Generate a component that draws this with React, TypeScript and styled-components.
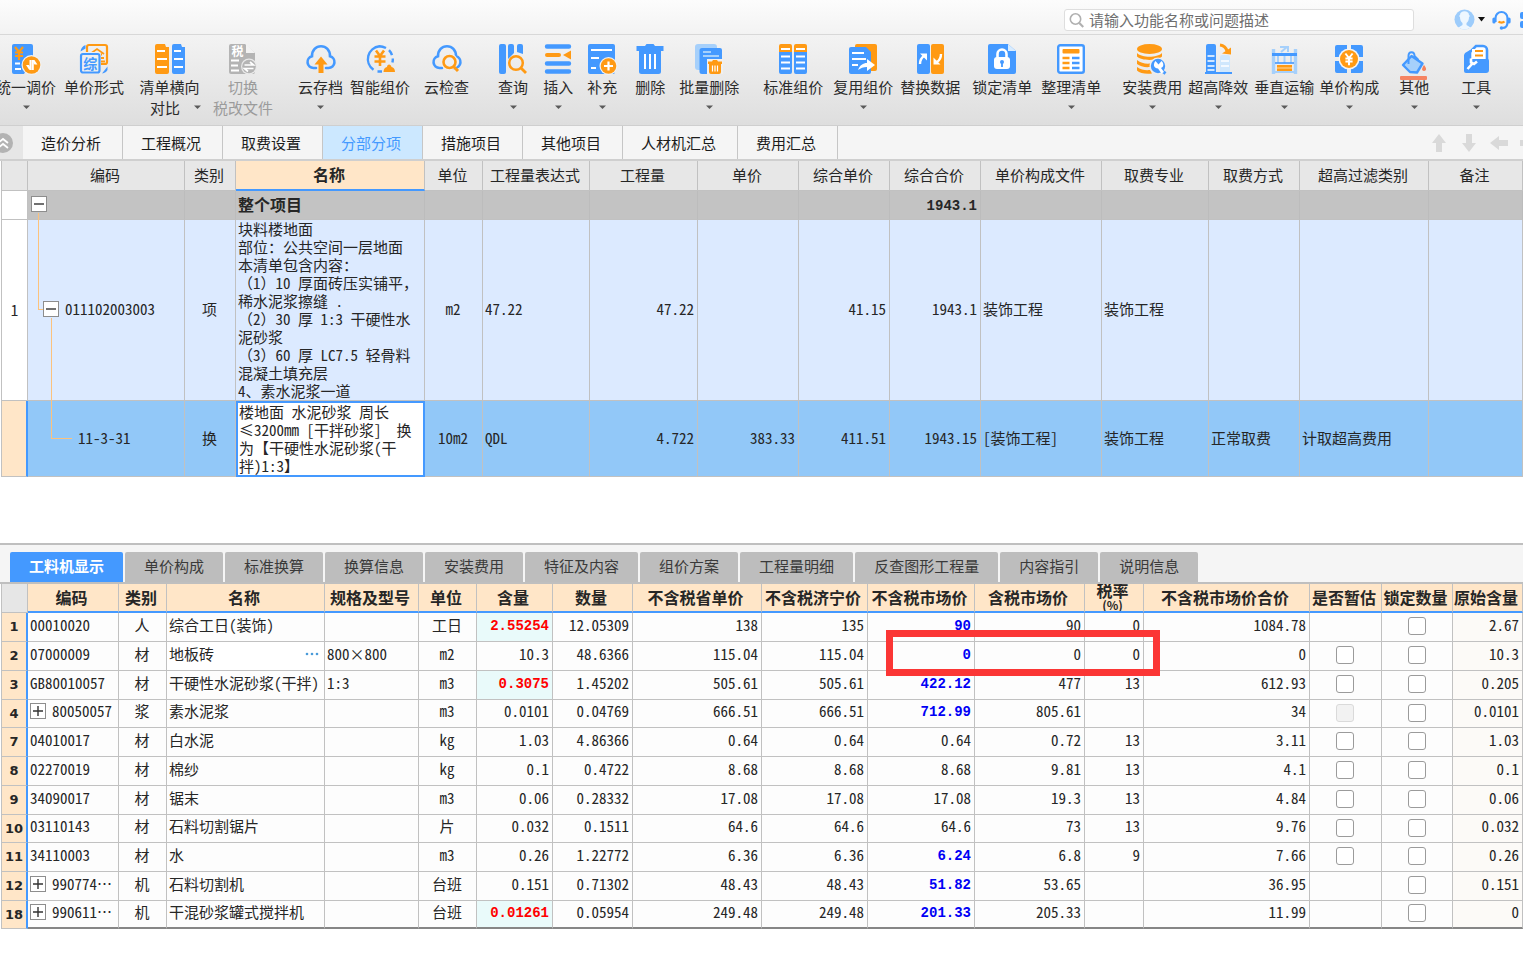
import React from "react";
import styled, { createGlobalStyle, css } from "styled-components";

const BLUE = "#4499ff";
const ORANGE = "#ff9a14";
const PALE = "#a6d0fb";
const GRAY = "#b4b4b4";
const LINE = "#c1c1c1";
const UI_FONT = '"Noto Sans CJK SC", "Liberation Sans", sans-serif';
const GRID_FONT = '"Noto Sans Mono CJK SC", "Liberation Mono", "Noto Sans CJK SC", monospace';
const NUM_FONT = '"Liberation Mono", monospace';

const GlobalStyle = createGlobalStyle`
  *, *::before, *::after { box-sizing: border-box; }
  body { margin: 0; background: #fff; color: #222; font-family: ${UI_FONT}; font-size: 15px; overflow: hidden; }
  button, input { font: inherit; color: inherit; }
  button { border: 0; background: none; padding: 0; margin: 0; }
`;

const Page = styled.div`
  display: flex;
  flex-direction: column;
  min-height: 100vh;
  overflow: hidden;
`;

/* ---------- title bar ---------- */

const TitleBar = styled.header`
  display: flex;
  align-items: center;
  justify-content: flex-end;
  height: 35px;
  padding-top: 5px;
  background: linear-gradient(#fcfcfc, #f3f3f3);
  border-bottom: 1px solid #d8d8d8;
`;

const SearchBox = styled.label`
  display: flex;
  align-items: center;
  gap: 5px;
  width: 350px;
  height: 22px;
  margin-right: 40px;
  padding: 0 4px;
  background: #fff;
  border: 1px solid #dedede;
  border-radius: 3px;
`;

const SearchInput = styled.input`
  flex: 1;
  min-width: 0;
  height: 20px;
  padding: 0;
  border: 0;
  outline: 0;
  background: none;
  line-height: 20px;
  &::placeholder { color: #6f6f6f; opacity: 1; }
`;

const UserButton = styled.button`
  display: flex;
  align-items: center;
  gap: 3px;
  margin-right: 7px;
`;

const TitleIcon = styled.button`
  display: flex;
  margin-right: 9px;
`;

const ClippedIcon = styled.button`
  display: flex;
  margin-right: -14px;
`;

/* ---------- ribbon ---------- */

const Ribbon = styled.div`
  display: flex;
  height: 91px;
  padding-top: 9px;
  background: linear-gradient(#f3f3f3, #dedede);
  border-bottom: 1px solid #cfcfcf;
`;

const ToolButton = styled.button<{ $before: number; $disabled?: boolean }>`
  display: flex;
  flex: none;
  flex-direction: column;
  align-items: center;
  margin-left: ${(p) => p.$before}px;
  line-height: 21px;
  color: ${(p) => (p.$disabled ? "#9b9b9b" : "#2b2b2b")};
  white-space: nowrap;
`;

const ToolLabel = styled.span`
  margin-top: 2px;
`;

const SecondLine = styled.span<{ $split?: boolean }>`
  display: flex;
  align-items: center;
  justify-content: center;
  gap: 14px;
  min-height: 21px;
  padding-left: ${(p) => (p.$split ? 12 : 0)}px;
`;

/* ---------- page tabs ---------- */

const TabStrip = styled.nav`
  display: flex;
  height: 35px;
  background: #f5f5f5;
  border-bottom: 2px solid #cfcfcf;
`;

const Collapse = styled.button`
  display: flex;
  align-items: center;
  width: 23px;
  background: #e6e6e6;
`;

const PageTab = styled.button<{ $active?: boolean }>`
  padding: 1px 21px 0 18px;
  border-right: 1px solid #c6c6c6;
  color: ${(p) => (p.$active ? BLUE : "#1c1c1c")};
  background: ${(p) => (p.$active ? "#cce8ff" : "transparent")};
  line-height: 20px;
  white-space: nowrap;
`;

const Arrows = styled.div`
  display: flex;
  align-items: center;
  gap: 12px;
  margin-left: auto;
  margin-right: -15px;
`;

const ArrowButton = styled.button`
  display: flex;
`;

/* ---------- grids ---------- */

const UpperPane = styled.section`
  height: 382px;
  padding-left: 1px;
  overflow: hidden;
`;

const Grid = styled.table`
  width: 100%;
  table-layout: fixed;
  border-collapse: separate;
  border-spacing: 0;
  font-family: ${GRID_FONT};
  font-size: 15px;
  line-height: 18px;
  color: #262626;
`;

const cellBorder = css`
  border-right: 1px solid ${LINE};
  border-bottom: 1px solid ${LINE};
`;

const UpperHead = styled.th<{ $current?: boolean }>`
  ${cellBorder}
  height: 30px;
  padding: 0 2px 2px 0;
  background: #e7e7e7;
  font-family: ${UI_FONT};
  font-weight: 400;
  white-space: nowrap;
  &:first-child { border-left: 1px solid ${LINE}; }
  ${(p) =>
    p.$current &&
    css`
      background: #ffe6c8;
      font-size: 16px;
      font-weight: 700;
      border-bottom: 2px solid ${BLUE};
    `}
`;

type Align = "left" | "center" | "right";

const Cell = styled.td<{ $align?: Align }>`
  ${cellBorder}
  padding: 0 3px 2px 2px;
  text-align: ${(p) => p.$align ?? "left"};
  white-space: nowrap;
`;

const ParagraphCell = styled(Cell)`
  padding-bottom: 0;
`;

const RowNumber = styled.th`
  ${cellBorder}
  border-left: 1px solid ${LINE};
  padding: 0;
  font-weight: 400;
  background: #fff;
`;

const TotalRow = styled.tr`
  height: 29px;
  font-size: 16px;
  font-weight: 700;
  background: #c3c3c3;
  ${Cell} { border-right-color: #bcbcbc; }
`;

const ItemRow = styled.tr`
  height: 181px;
  background: #dceaff;
`;

const CurrentRow = styled.tr`
  height: 76px;
  background: #92c8f8;
  ${RowNumber} {
    background: #ffe6c8;
    border-right: 2px solid ${BLUE};
  }
`;

const EditedCell = styled(ParagraphCell)`
  background: #fff;
  border: 2px solid ${BLUE};
  padding: 0 0 0 1px;
`;

const TreeCell = styled(Cell)<{ $indent: number }>`
  position: relative;
  padding-left: ${(p) => p.$indent}px;
`;

const TreeLine = styled.div`
  display: flex;
  align-items: center;
  gap: 6px;
`;

const TreeToggle = styled.button`
  display: flex;
  flex: none;
  align-items: center;
  justify-content: center;
  width: 16px;
  height: 16px;
  background: #fff;
  border: 1px solid #8d8d8d;
`;

const branch = css`
  content: "";
  position: absolute;
  border: 0 solid #fcc27c;
`;

const RootCell = styled(TreeCell)`
  &::after { ${branch} left: 10px; top: 22px; bottom: -1px; border-left-width: 1px; }
`;

const ParentCell = styled(TreeCell)`
  &::before { ${branch} left: 10px; top: 0; bottom: 50%; width: 5px; border-left-width: 1px; border-bottom-width: 1px; }
  &::after { ${branch} left: 23px; top: 98px; bottom: -1px; border-left-width: 1px; }
`;

const LeafCell = styled(TreeCell)`
  &::before { ${branch} left: 23px; top: 0; bottom: 50%; width: 21px; border-left-width: 1px; border-bottom-width: 1px; }
`;

/* ---------- lower pane ---------- */

const LowerPane = styled.section`
  border-top: 2px solid #bfbfbf;
`;

const DetailTabs = styled.nav`
  display: flex;
  align-items: flex-end;
  gap: 2px;
  height: 39px;
  padding-left: 10px;
  background: #f5f5f5;
  border-bottom: 2px solid #bfbfbf;
`;

const DetailTab = styled.button<{ $active?: boolean }>`
  height: 30px;
  padding: 0 19px 2px;
  border-radius: 2px 2px 0 0;
  line-height: 28px;
  white-space: nowrap;
  color: ${(p) => (p.$active ? "#fff" : "#3a3a3a")};
  font-weight: ${(p) => (p.$active ? 700 : 400)};
  background: ${(p) => (p.$active ? BLUE : "#bdbdbd")};
`;

const LowerWrap = styled.div`
  padding-left: 1px;
`;

const ResourceGrid = styled(Grid)`
  background: #fdfdfd;
  ${RowNumber} {
    font-family: "DejaVu Sans", sans-serif;
    font-size: 13px;
    font-weight: 700;
    background: #ffe6c8;
    border-right: 2px solid ${BLUE};
  }
  ${Cell} { padding-bottom: 5px; }
  ${Cell}:last-child { background: #fcfaf7; }
  tbody tr { height: 29px; }
  tbody tr:nth-child(4n), tbody tr:last-child { height: 28px; }
  tbody tr:last-child ${Cell} { border-bottom: 2px solid #868686; }
`;

const LowerHead = styled.th`
  height: 29px;
  padding: 0;
  border-right: 1px solid ${LINE};
  border-bottom: 2px solid ${BLUE};
  background: #ffe6c8;
  font-family: ${UI_FONT};
  font-size: 16px;
  font-weight: 700;
  line-height: 16px;
  white-space: nowrap;
  &:first-child { background: #e6e6e6; border-left: 1px solid ${LINE}; border-bottom: 1px solid ${LINE}; }
`;

const HeadText = styled.div`
  display: flex;
  flex-direction: column;
  align-items: center;
  justify-content: center;
  height: 27px;
  padding: 0 3px 2px 0;
  overflow: hidden;
`;

const HeadUnit = styled.span`
  font-size: 12px;
  line-height: 13px;
`;

const Emphasis = styled.span<{ $tone: string }>`
  font-family: ${NUM_FONT};
  font-size: 14px;
  font-weight: 700;
  color: ${(p) => p.$tone};
`;

const ChangedCell = styled(Cell)`
  background: #e9fafa;
`;

const PickerCell = styled(Cell)`
  background: #fff;
`;

const PickerLine = styled.div`
  display: flex;
  align-items: center;
  justify-content: space-between;
`;

const PickerButton = styled.button`
  display: flex;
`;

const MarkedCell = styled(Cell)`
  position: relative;
`;

const RedFrame = styled.span`
  position: absolute;
  z-index: 2;
  left: 18px;
  top: -12px;
  width: 274px;
  height: 46px;
  border: 7px solid #fb3635;
  pointer-events: none;
`;

const Tick = styled.input`
  appearance: none;
  display: block;
  width: 18px;
  height: 18px;
  margin: 3px auto 0;
  background: #fff;
  border: 1px solid #9b9b9b;
  border-radius: 3px;
  &:disabled { background: #f2f2f2; border-color: #dadada; }
`;

/* ---------- icons ---------- */

const IconSvg = styled.svg`
  overflow: visible;
`;

const Svg = ({ children }: { children: React.ReactNode }) => (
  <IconSvg width="30" height="30" viewBox="0 0 30 30" fill="none" aria-hidden="true">
    {children}
  </IconSvg>
);

const Caret = ({ color = "#5a5a5a" }: { color?: string }) => (
  <svg width="7" height="21" viewBox="0 0 7 21" aria-hidden="true">
    <path d="M0 8.500h7L3.500 12z" fill={color} />
  </svg>
);

const Yen = ({ x, y, s, color }: { x: number; y: number; s: number; color: string }) => (
  <g transform={`translate(${x} ${y}) scale(${s})`} stroke={color} strokeWidth="2.200">
    <path d="M1 0l4 5 4-5M5 5v8M1 5.500h8M1 9h8" />
  </g>
);

const Cloud = () => (
  <path
    d="M10 24H7.500A6 6 0 0 1 6 12.200C6 6 10 2.300 15 2.300s9 3.700 9 9.900A6 6 0 0 1 22.500 24H20"
    stroke={BLUE}
    strokeWidth="2.600"
    strokeLinecap="round"
  />
);

const icons: Record<string, React.ReactNode> = {
  adjust: (
    <Svg>
      <path d="M3 0h17a2 2 0 0 1 2 2v12l-9 16H3a2 2 0 0 1-2-2V2a2 2 0 0 1 2-2z" fill={BLUE} />
      <Yen x={3} y={3} s={1} color={ORANGE} />
      <path d="M4 19.500h5M4 25h6" stroke="#fff" strokeWidth="1.800" />
      <circle cx="20.500" cy="21" r="10" fill="#f2f2f2" />
      <circle cx="20.500" cy="21" r="8.800" fill={ORANGE} />
      <path d="M19.500 16v10M21.800 26V16" stroke="#fff" strokeWidth="2" />
      <path d="M20.400 25.500h-2.400l-3-4.500h3zM21 16h2.400l3 4.500h-3z" fill="#fff" />
    </Svg>
  ),
  priceForm: (
    <Svg>
      <rect x="8" y="1" width="20" height="19" rx="2" stroke={ORANGE} strokeWidth="2.200" />
      <path d="M11 10l7-5 7 5M14 10.500h9M21 14h4M21 17.500h5" stroke={ORANGE} strokeWidth="1.800" />
      <rect x="0" y="8" width="22" height="22" rx="3" fill="#efefef" />
      <rect x="2" y="10" width="18.500" height="18.500" rx="2" stroke={BLUE} strokeWidth="2.200" />
      <text x="11.200" y="24.500" textAnchor="middle" fontSize="14" fontWeight="700" fill={BLUE}>综</text>
      <path d="M1.500 7.500c.5-3 2-5.500 5-6.500v3.500zM23 29.500l5.500-7v3.500c-1 2-2.500 3-5.500 3.500z" fill={BLUE} />
    </Svg>
  ),
  compare: (
    <Svg>
      <path d="M2 0h8l1 3h3v25a2 2 0 0 1-2 2H2a2 2 0 0 1-2-2V2a2 2 0 0 1 2-2z" fill={ORANGE} />
      <path d="M19 0h7l1 3h3v25a2 2 0 0 1-2 2h-9a2 2 0 0 1-2-2V2a2 2 0 0 1 2-2z" fill={BLUE} />
      <path d="M2 7h8M2 15h10M2 23h10M19 7h7M19 15h9M19 23h9" stroke="#fff" strokeWidth="2" />
    </Svg>
  ),
  switchTax: (
    <Svg>
      <path d="M3 0h14l10 9v19a2 2 0 0 1-2 2H3a2 2 0 0 1-2-2V2a2 2 0 0 1 2-2z" fill={GRAY} />
      <path d="M18 0v9h9z" fill="#f2f2f2" />
      <text x="9.500" y="12" textAnchor="middle" fontSize="12" fontWeight="700" fill="#fff">税</text>
      <path d="M3 16.500h8M3 21.500h7M3 26.500h8" stroke="#fff" strokeWidth="1.800" />
      <circle cx="21" cy="22.500" r="8" fill="#e9e9e9" />
      <circle cx="21" cy="22.500" r="6.800" fill={GRAY} />
      <path d="M16.500 21h9l-3.500-3M25.500 24.500h-9l3.500 3" stroke="#fff" strokeWidth="1.700" />
    </Svg>
  ),
  cloudSave: (
    <Svg>
      <Cloud />
      <path d="M15 12.500l6.500 8h-4V29h-5v-8.500h-4z" fill={ORANGE} />
    </Svg>
  ),
  smart: (
    <Svg>
      <path d="M8.500 25.800A13 13 0 0 1 14.500 2.200q3 0 6.500 1.800M24 6.200a13 13 0 0 1 3 5M27.800 14.500a13 13 0 0 1-.4 4M12.500 27.500h4.500" stroke={BLUE} strokeWidth="2.400" />
      <path d="M11 6.500l4 5.500 4-5.500M15 11v11M9.500 12.500h11M9.500 17.500h11" stroke={ORANGE} strokeWidth="2.600" />
      <path d="M18.500 28c0-3 1.500-4.500 3.500-5 0-3.500 4-3.500 4.500 0 2 .5 3.500 2 3.500 5z" fill={ORANGE} />
    </Svg>
  ),
  cloudCheck: (
    <Svg>
      <Cloud />
      <circle cx="17.500" cy="18" r="8.500" fill="#efefef" />
      <circle cx="17.500" cy="18" r="6" stroke={ORANGE} strokeWidth="2.600" />
      <path d="M21.500 22.500l4.500 4.500" stroke={ORANGE} strokeWidth="3" />
    </Svg>
  ),
  query: (
    <Svg>
      <rect x="1" width="7" height="30" rx="2" fill={BLUE} />
      <path d="M10 2a2 2 0 0 1 2-2h2a2 2 0 0 1 2 2v7l-6 6zM19 2a2 2 0 0 1 2-2h2a2 2 0 0 1 2 2v8l-6-2z" fill={BLUE} />
      <circle cx="18" cy="19" r="6.800" stroke={ORANGE} strokeWidth="2.500" />
      <path d="M23 24l5 5" stroke={ORANGE} strokeWidth="2.800" />
    </Svg>
  ),
  insert: (
    <Svg>
      <path d="M4 2.500h22M4 19.500h22M4 27.500h22" stroke={BLUE} strokeWidth="4.400" strokeLinecap="round" />
      <path d="M4 11h12" stroke={ORANGE} strokeWidth="4" strokeLinecap="round" />
      <path d="M20 11l8-4.500v9z" fill={ORANGE} />
    </Svg>
  ),
  supplement: (
    <Svg>
      <rect x="1" width="27" height="30" rx="2" fill={BLUE} />
      <path d="M4 6h21M4 14h8M4 24h5" stroke="#fff" strokeWidth="2" />
      <circle cx="21.500" cy="22" r="9" fill="#f2f2f2" />
      <circle cx="21.500" cy="22" r="7.800" fill={ORANGE} />
      <path d="M21.500 17.500v9M17 22h9" stroke="#fff" strokeWidth="2.200" />
    </Svg>
  ),
  trash: (
    <Svg>
      <path d="M10 2l1.500-2h7L20 2h8.500v5H26v20.500a2.500 2.500 0 0 1-2.500 2.500h-17A2.500 2.500 0 0 1 4 27.500V7H1.500V2z" fill={BLUE} />
      <path d="M10 10v15M15 10v15M20 10v15" stroke="#fff" strokeWidth="2" />
    </Svg>
  ),
  batchTrash: (
    <Svg>
      <rect x="1" width="22" height="26" rx="3" fill={PALE} />
      <path d="M8 4h18a2 2 0 0 1 2 2v10l-10 14H8a2.500 2.500 0 0 1-2.500-2.500v-21A2.500 2.500 0 0 1 8 4z" fill={BLUE} />
      <path d="M9 8h8M9 12h16" stroke={PALE} strokeWidth="2" />
      <path d="M13 15h16v15H13z" fill="#f0f0f0" />
      <path d="M14 17.500h4l1-1.500h4l1 1.500h4V20h-1v8a2 2 0 0 1-2 2h-8a2 2 0 0 1-2-2v-8h-1z" fill={ORANGE} />
      <path d="M18.500 21.500v6M21 21.500v6M23.500 21.500v6" stroke="#fff" strokeWidth="1.200" />
    </Svg>
  ),
  standard: (
    <Svg>
      <path d="M1 8V2a2 2 0 0 1 2-2h9a2 2 0 0 1 2 2v6zM16 8V2a2 2 0 0 1 2-2h9a2 2 0 0 1 2 2v6z" fill={ORANGE} />
      <path d="M1 8h13v20a2 2 0 0 1-2 2H3a2 2 0 0 1-2-2zM16 8h13v20a2 2 0 0 1-2 2h-9a2 2 0 0 1-2-2z" fill={BLUE} />
      <path d="M3 5h9M18 5h9M3 12.500h9M18 12.500h9M3 18.500h9M18 18.500h9M3 24.500h9M18 24.500h9" stroke="#fff" strokeWidth="1.800" />
    </Svg>
  ),
  reuse: (
    <Svg>
      <rect x="7" width="22" height="27" rx="2" fill={ORANGE} />
      <path d="M3 3h15l5 5v20a2 2 0 0 1-2 2H3a2 2 0 0 1-2-2V5a2 2 0 0 1 2-2z" fill={BLUE} />
      <path d="M4 9h12M4 15h14M4 21h6" stroke="#fff" strokeWidth="1.800" />
      <path d="M10 26c2-5 5-7 9-7v-4l8 6-8 6v-4c-4 0-6 1-9 3z" fill="#fff" />
    </Svg>
  ),
  replace: (
    <Svg>
      <rect x="2" width="13" height="30" rx="2" fill={BLUE} />
      <rect x="16" width="13" height="30" rx="2" fill={ORANGE} />
      <path d="M5 20c0-4 1-6 4-8M26 10c0 4-1 6-4 8" stroke="#fff" strokeWidth="2.400" />
      <path d="M5 9.500h7v7zM25.500 20.500h-7v-7z" fill="#fff" />
    </Svg>
  ),
  lock: (
    <Svg>
      <path d="M3 0h18l8 7v21a2 2 0 0 1-2 2H3a2 2 0 0 1-2-2V2a2 2 0 0 1 2-2z" fill={BLUE} />
      <path d="M21 0v7h8z" fill="#d8ecff" />
      <path d="M10.500 14v-4a4.500 4.500 0 0 1 9 0v4" stroke="#fff" strokeWidth="2.600" />
      <rect x="7" y="13" width="16" height="12" rx="3" fill="#fff" />
      <circle cx="15" cy="18" r="2" fill={BLUE} />
      <path d="M15 18v5" stroke={BLUE} strokeWidth="1.800" />
    </Svg>
  ),
  arrange: (
    <Svg>
      <rect x="2.200" y="1.200" width="25.600" height="27.600" rx="2" fill="#fff" stroke={BLUE} strokeWidth="2.400" />
      <rect x="6.500" y="5" width="17" height="4.500" rx="1" fill={ORANGE} />
      <path d="M6.500 14h7M6.500 19h7M6.500 24h7" stroke={ORANGE} strokeWidth="2.400" />
      <path d="M16 14h7.500M16 19h7.500M16 24h7.500" stroke={BLUE} strokeWidth="2.400" />
    </Svg>
  ),
  install: (
    <Svg>
      <ellipse cx="12.500" cy="5" rx="12.500" ry="5" fill={ORANGE} />
      <path d="M0 9c5 5 20 5 25 0v3.500c-4 4.500-21 4.500-25 0zM0 16c4 3.500 9 4 14 3.500l-1 3.500c-5 .5-10-.5-13-3zM0 23c4 3 9 3.500 13 3l2 3.500c-6 .8-12 0-15-3z" fill={ORANGE} />
      <circle cx="21" cy="22" r="8.500" fill="#efefef" />
      <circle cx="21" cy="22" r="7.200" fill={BLUE} />
      <path d="M24 26l4.500 3.500" stroke={BLUE} strokeWidth="3" />
      <path d="M18.500 17l3 3.500 3-3.500c3 3 2 6-.5 7l3 4-2.500 1.500-3.500-5c-4 0-5.500-4-2.500-7.500z" fill="#fff" />
    </Svg>
  ),
  highRise: (
    <Svg>
      <path d="M3 2a2 2 0 0 1 2-2h6a2 2 0 0 1 2 2v27H3z" fill={BLUE} />
      <path d="M4.500 12h7M4.500 17h7M4.500 22h7M4.500 26h7" stroke="#fff" strokeWidth="1.600" />
      <path d="M17 13a2 2 0 0 1 2-2h6a2 2 0 0 1 2 2v16H17z" fill="#cfe7fd" />
      <path d="M18 17h8M18 22h8" stroke="#fff" strokeWidth="1.600" />
      <path d="M2 29h27" stroke={BLUE} strokeWidth="2" />
      <path d="M17 1c4 .5 6 2.500 7 6" stroke={ORANGE} strokeWidth="3" />
      <path d="M19 9.500l9-6v7z" fill={ORANGE} />
    </Svg>
  ),
  vertical: (
    <Svg>
      <path d="M4.500 5v25M26.500 5v25" stroke={PALE} strokeWidth="3.400" />
      <path d="M3 10.500h25" stroke={BLUE} strokeWidth="3" />
      <path d="M11 3h8v5M12 8l6-5M9 12v7M15.500 12v7M22 12v7M5 28h21" stroke={PALE} strokeWidth="2" />
      <path d="M6 19h19" stroke={BLUE} strokeWidth="1.600" />
      <rect x="8" y="21" width="15" height="6" fill={ORANGE} />
      <path d="M8 24h15" stroke="#ffd9a0" strokeWidth="1" />
    </Svg>
  ),
  compose: (
    <Svg>
      <path d="M3 1h10v6L7 13H1V3a2 2 0 0 1 2-2zM17 1h10a2 2 0 0 1 2 2v10h-6l-6-6zM1 17h6l6 6v6H3a2 2 0 0 1-2-2zM23 17h6v10a2 2 0 0 1-2 2H17v-6z" fill={BLUE} />
      <circle cx="15" cy="15" r="10.500" fill="#f4f4f4" />
      <circle cx="15" cy="15" r="9" fill={ORANGE} />
      <Yen x={10.5} y={9.5} s={0.9} color="#fff" />
    </Svg>
  ),
  other: (
    <Svg>
      <path d="M12.500 12L4 21l7 7 7 .5 5.500-9z" fill={PALE} stroke={BLUE} strokeWidth="2.400" strokeLinejoin="round" />
      <path d="M9.500 20v-8c0-5 6-5 6 0l4 4" stroke={BLUE} strokeWidth="2" />
      <path d="M25 21c2.500 3 3 5.500 0 6-3-.5-2-3 0-6z" fill="#f5835d" />
      <rect x="1" y="32" width="27" height="4" rx="1" fill="#f58462" />
    </Svg>
  ),
  tools: (
    <Svg>
      <path d="M9 14V8l6-6h7a4 4 0 0 1 4 4v10" fill="#fff" stroke={BLUE} strokeWidth="2.600" />
      <path d="M4 9l5-3 1 9h17a2 2 0 0 1 1 2v9a3 3 0 0 1-3 3H5a2 2 0 0 1-2-2V11z" fill={BLUE} />
      <rect x="11" y="5" width="12" height="10" fill="#fff" />
      <path d="M14 7h8M14 11.500h8" stroke={ORANGE} strokeWidth="2.200" />
      <path d="M6.500 25l5-5.500M10 14.500v4l3 1.500 3-2.500" stroke="#fff" strokeWidth="2.600" />
    </Svg>
  ),
};

/* ---------- data ---------- */

type Tool = { icon: string; label: string; before: number; second?: string; caret?: boolean; disabled?: boolean };

const tools: Tool[] = [
  { icon: "adjust", label: "统一调价", before: -4, caret: true },
  { icon: "priceForm", label: "单价形式", before: 8 },
  { icon: "compare", label: "清单横向", before: 14, second: "对比", caret: true },
  { icon: "switchTax", label: "切换", before: 12, second: "税改文件", disabled: true },
  { icon: "cloudSave", label: "云存档", before: 25, caret: true },
  { icon: "smart", label: "智能组价", before: 7 },
  { icon: "cloudCheck", label: "云检查", before: 14 },
  { icon: "query", label: "查询", before: 29, caret: true },
  { icon: "insert", label: "插入", before: 15, caret: true },
  { icon: "supplement", label: "补充", before: 14, caret: true },
  { icon: "trash", label: "删除", before: 18 },
  { icon: "batchTrash", label: "批量删除", before: 14, caret: true },
  { icon: "standard", label: "标准组价", before: 24 },
  { icon: "reuse", label: "复用组价", before: 10, caret: true },
  { icon: "replace", label: "替换数据", before: 7 },
  { icon: "lock", label: "锁定清单", before: 12 },
  { icon: "arrange", label: "整理清单", before: 9, caret: true },
  { icon: "install", label: "安装费用", before: 21, caret: true },
  { icon: "highRise", label: "超高降效", before: 6, caret: true },
  { icon: "vertical", label: "垂直运输", before: 6, caret: true },
  { icon: "compose", label: "单价构成", before: 5, caret: true },
  { icon: "other", label: "其他", before: 20, caret: true },
  { icon: "tools", label: "工具", before: 32, caret: true },
];

const pageTabs = ["造价分析", "工程概况", "取费设置", "分部分项", "措施项目", "其他项目", "人材机汇总", "费用汇总"];

const upperWidths = [27, 157, 51, 189, 58, 107, 108, 101, 91, 91, 121, 107, 91, 129];
const upperHeads = ["", "编码", "类别", "名称", "单位", "工程量表达式", "工程量", "单价", "综合单价", "综合合价", "单价构成文件", "取费专业", "取费方式", "超高过滤类别", "备注"];

const itemLines = [
  "块料楼地面",
  "部位：公共空间一层地面",
  "本清单包含内容：",
  "（1）10 厚面砖压实铺平，",
  "稀水泥浆擦缝 .",
  "（2）30 厚 1:3 干硬性水",
  "泥砂浆",
  "（3）60 厚 LC7.5 轻骨料",
  "混凝土填充层",
  "4、素水泥浆一道",
];

const normLines = ["楼地面 水泥砂浆 周长", "≤3200mm [干拌砂浆]\u00a0 换", "为【干硬性水泥砂浆(干", "拌)1:3】"];

const detailTabs = ["工料机显示", "单价构成", "标准换算", "换算信息", "安装费用", "特征及内容", "组价方案", "工程量明细", "反查图形工程量", "内容指引", "说明信息"];

const lowerWidths = [27, 91, 48, 158, 94, 58, 76, 80, 129, 106, 107, 110, 59, 166, 72, 71];

type Head = { text: string; unit?: string };

const lowerHeads: Head[] = [
  { text: "" }, { text: "编码" }, { text: "类别" }, { text: "名称" }, { text: "规格及型号" }, { text: "单位" },
  { text: "含量" }, { text: "数量" }, { text: "不含税省单价" }, { text: "不含税济宁价" }, { text: "不含税市场价" },
  { text: "含税市场价" }, { text: "税率", unit: "(%)" }, { text: "不含税市场价合价" }, { text: "是否暂估" },
  { text: "锁定数量" }, { text: "原始含量" },
];

type Estimate = "box" | "disabled" | "";

type Resource = {
  no: number; code: string; expandable?: boolean; kind: string; name: string; spec?: string; unit: string;
  content: string; changed?: boolean; qty: string; province: string; city: string;
  market: string; marketBlue?: boolean; taxed: string; rate: string; total: string;
  estimate: Estimate; original: string; marked?: boolean;
};

const resources: Resource[] = [
  { no: 1, code: "00010020", kind: "人", name: "综合工日(装饰)", unit: "工日", content: "2.55254", changed: true, qty: "12.05309", province: "138", city: "135", market: "90", marketBlue: true, taxed: "90", rate: "0", total: "1084.78", estimate: "", original: "2.67" },
  { no: 2, code: "07000009", kind: "材", name: "地板砖", spec: "800×800", unit: "m2", content: "10.3", qty: "48.6366", province: "115.04", city: "115.04", market: "0", marketBlue: true, taxed: "0", rate: "0", total: "0", estimate: "box", original: "10.3", marked: true },
  { no: 3, code: "GB80010057", kind: "材", name: "干硬性水泥砂浆(干拌)", spec: "1:3", unit: "m3", content: "0.3075", changed: true, qty: "1.45202", province: "505.61", city: "505.61", market: "422.12", marketBlue: true, taxed: "477", rate: "13", total: "612.93", estimate: "box", original: "0.205" },
  { no: 4, code: "80050057", expandable: true, kind: "浆", name: "素水泥浆", unit: "m3", content: "0.0101", qty: "0.04769", province: "666.51", city: "666.51", market: "712.99", marketBlue: true, taxed: "805.61", rate: "", total: "34", estimate: "disabled", original: "0.0101" },
  { no: 7, code: "04010017", kind: "材", name: "白水泥", unit: "kg", content: "1.03", qty: "4.86366", province: "0.64", city: "0.64", market: "0.64", taxed: "0.72", rate: "13", total: "3.11", estimate: "box", original: "1.03" },
  { no: 8, code: "02270019", kind: "材", name: "棉纱", unit: "kg", content: "0.1", qty: "0.4722", province: "8.68", city: "8.68", market: "8.68", taxed: "9.81", rate: "13", total: "4.1", estimate: "box", original: "0.1" },
  { no: 9, code: "34090017", kind: "材", name: "锯末", unit: "m3", content: "0.06", qty: "0.28332", province: "17.08", city: "17.08", market: "17.08", taxed: "19.3", rate: "13", total: "4.84", estimate: "box", original: "0.06" },
  { no: 10, code: "03110143", kind: "材", name: "石料切割锯片", unit: "片", content: "0.032", qty: "0.1511", province: "64.6", city: "64.6", market: "64.6", taxed: "73", rate: "13", total: "9.76", estimate: "box", original: "0.032" },
  { no: 11, code: "34110003", kind: "材", name: "水", unit: "m3", content: "0.26", qty: "1.22772", province: "6.36", city: "6.36", market: "6.24", marketBlue: true, taxed: "6.8", rate: "9", total: "7.66", estimate: "box", original: "0.26" },
  { no: 12, code: "990774…", expandable: true, kind: "机", name: "石料切割机", unit: "台班", content: "0.151", qty: "0.71302", province: "48.43", city: "48.43", market: "51.82", marketBlue: true, taxed: "53.65", rate: "", total: "36.95", estimate: "", original: "0.151" },
  { no: 18, code: "990611…", expandable: true, kind: "机", name: "干混砂浆罐式搅拌机", unit: "台班", content: "0.01261", changed: true, qty: "0.05954", province: "249.48", city: "249.48", market: "201.33", marketBlue: true, taxed: "205.33", rate: "", total: "11.99", estimate: "", original: "0" },
];

/* ---------- pieces ---------- */

const Lines = ({ lines }: { lines: string[] }) => (
  <>
    {lines.map((line, i) => (
      <React.Fragment key={line}>
        {i > 0 && <br />}
        {line}
      </React.Fragment>
    ))}
  </>
);

const Columns = ({ widths }: { widths: number[] }) => (
  <colgroup>
    {widths.map((w, i) => (
      <col key={i} width={w} />
    ))}
    <col />
  </colgroup>
);

const Toggle = ({ open, label }: { open?: boolean; label: string }) => (
  <TreeToggle type="button" aria-label={label}>
    <svg width="10" height="10" viewBox="0 0 10 10" aria-hidden="true">
      <path d={open ? "M0 5h10" : "M0 5h10M5 0v10"} stroke="#333" strokeWidth="1.400" />
    </svg>
  </TreeToggle>
);

const MoveArrow = ({ turn, label }: { turn: number; label: string }) => (
  <ArrowButton type="button" aria-label={label}>
    <svg width="18" height="18" viewBox="0 0 18 18" aria-hidden="true">
      <path d="M9 0l7 9h-4v9H6V9H2z" fill="#d9d9d9" transform={`rotate(${turn} 9 9)`} />
    </svg>
  </ArrowButton>
);

const Tool = ({ tool }: { tool: Tool }) => (
  <ToolButton type="button" $before={tool.before} $disabled={tool.disabled} disabled={tool.disabled}>
    {icons[tool.icon]}
    <ToolLabel>{tool.label}</ToolLabel>
    <SecondLine $split={Boolean(tool.second && tool.caret)}>
      {tool.second}
      {tool.caret && <Caret />}
    </SecondLine>
  </ToolButton>
);

const ResourceRow = ({ r }: { r: Resource }) => {
  const Content = r.changed ? ChangedCell : Cell;
  const Market = r.marked ? MarkedCell : Cell;
  const Name = r.marked ? PickerCell : Cell;
  return (
    <tr>
      <RowNumber scope="row">{r.no}</RowNumber>
      <Cell>
        <TreeLine>
          {r.expandable && <Toggle label={`展开 ${r.code}`} />}
          {r.code}
        </TreeLine>
      </Cell>
      <Cell $align="center">{r.kind}</Cell>
      <Name>
        {r.marked ? (
          <PickerLine>
            {r.name}
            <PickerButton type="button" aria-label="选择材料">
              <svg width="16" height="4" viewBox="0 0 16 4" fill="#4a9bd9" aria-hidden="true">
                <circle cx="2" cy="2" r="1.300" />
                <circle cx="7" cy="2" r="1.300" />
                <circle cx="12" cy="2" r="1.300" />
              </svg>
            </PickerButton>
          </PickerLine>
        ) : (
          r.name
        )}
      </Name>
      <Cell>{r.spec}</Cell>
      <Cell $align="center">{r.unit}</Cell>
      <Content $align="right">{r.changed ? <Emphasis $tone="#f00">{r.content}</Emphasis> : r.content}</Content>
      <Cell $align="right">{r.qty}</Cell>
      <Cell $align="right">{r.province}</Cell>
      <Cell $align="right">{r.city}</Cell>
      <Market $align="right">
        {r.marketBlue ? <Emphasis $tone="#0000f5">{r.market}</Emphasis> : r.market}
        {r.marked && <RedFrame />}
      </Market>
      <Cell $align="right">{r.taxed}</Cell>
      <Cell $align="right">{r.rate}</Cell>
      <Cell $align="right">{r.total}</Cell>
      <Cell>{r.estimate && <Tick type="checkbox" disabled={r.estimate === "disabled"} aria-label={`${r.name} 是否暂估`} />}</Cell>
      <Cell>
        <Tick type="checkbox" aria-label={`${r.name} 锁定数量`} />
      </Cell>
      <Cell $align="right">{r.original}</Cell>
    </tr>
  );
};

export default function App() {
  return (
    <Page>
      <GlobalStyle />
      <TitleBar>
        <SearchBox>
          <svg width="15" height="16" viewBox="0 0 15 16" fill="none" stroke="#b0b0b0" strokeWidth="1.600" aria-hidden="true">
            <circle cx="6.500" cy="7" r="5.200" />
            <path d="M10.300 11l4 4" strokeWidth="2.200" />
          </svg>
          <SearchInput type="text" placeholder="请输入功能名称或问题描述" aria-label="搜索功能" />
        </SearchBox>
        <UserButton type="button" aria-label="账户">
          <svg width="21" height="21" viewBox="0 0 21 21" aria-hidden="true">
            <circle cx="10.500" cy="10.500" r="10" fill="#9dccfb" />
            <path d="M6 6c0-5 9-5 9 0l1 1-1 1c0 3-1 5-2.500 6v2l4 2.500c-4 2.500-8 2.500-12 0l4-2.500v-2C7 13 6 11 6 8L5 7z" fill="#eef7ff" />
          </svg>
          <svg width="7" height="5" viewBox="0 0 7 5" aria-hidden="true">
            <path d="M0 0h7L3.500 4.500z" fill="#111" />
          </svg>
        </UserButton>
        <TitleIcon type="button" aria-label="客服">
          <svg width="19" height="20" viewBox="0 0 19 20" fill="none" aria-hidden="true">
            <path d="M3.500 12V8a6 6 0 0 1 12 0v4c0 4-2 6-5 6" stroke={BLUE} strokeWidth="2.200" />
            <path d="M2 9v3M17 9v3" stroke={BLUE} strokeWidth="3.200" strokeLinecap="round" />
            <path d="M6.500 11.500c1.500 1.500 4.500 1.500 6 0" stroke={ORANGE} strokeWidth="2.200" />
            <circle cx="9.500" cy="18" r="1.800" fill={BLUE} />
          </svg>
        </TitleIcon>
        <ClippedIcon type="button" aria-label="应用">
          <svg width="17" height="16" viewBox="0 0 17 16" fill={BLUE} aria-hidden="true">
            <rect width="7" height="7" rx="2" />
            <rect x="9" width="7" height="7" rx="2" />
            <rect y="9" width="7" height="7" rx="2" />
            <rect x="9" y="9" width="7" height="7" rx="2" />
          </svg>
        </ClippedIcon>
      </TitleBar>

      <Ribbon>
        {tools.map((tool) => (
          <Tool key={tool.icon} tool={tool} />
        ))}
      </Ribbon>

      <TabStrip>
        <Collapse type="button" aria-label="收起">
          <svg width="13" height="20" viewBox="0 0 13 20" aria-hidden="true">
            <circle cx="3" cy="10" r="10" fill="#b3b3b3" />
            <path d="M-2 10l5-4 5 4M-2 15l5-4 5 4" fill="none" stroke="#fff" strokeWidth="1.800" />
          </svg>
        </Collapse>
        {pageTabs.map((tab) => (
          <PageTab key={tab} type="button" $active={tab === "分部分项"}>{tab}</PageTab>
        ))}
        <Arrows>
          <MoveArrow turn={0} label="上移" />
          <MoveArrow turn={180} label="下移" />
          <MoveArrow turn={270} label="左移" />
          <MoveArrow turn={90} label="右移" />
        </Arrows>
      </TabStrip>

      <UpperPane>
        <Grid>
          <Columns widths={upperWidths} />
          <thead>
            <tr>
              {upperHeads.map((head, i) => (
                <UpperHead key={i} scope="col" $current={head === "名称"}>{head}</UpperHead>
              ))}
            </tr>
          </thead>
          <tbody>
            <TotalRow>
              <RowNumber />
              <RootCell $indent={3}><TreeLine><Toggle open label="收起 整个项目" /></TreeLine></RootCell>
              <Cell />
              <Cell>整个项目</Cell>
              <Cell /><Cell /><Cell /><Cell /><Cell />
              <Cell $align="right"><Emphasis $tone="#262626">1943.1</Emphasis></Cell>
              <Cell /><Cell /><Cell /><Cell /><Cell />
            </TotalRow>
            <ItemRow>
              <RowNumber scope="row">1</RowNumber>
              <ParentCell $indent={15}>
                <TreeLine><Toggle open label="收起 011102003003" />011102003003</TreeLine>
              </ParentCell>
              <Cell $align="center">项</Cell>
              <ParagraphCell><Lines lines={itemLines} /></ParagraphCell>
              <Cell $align="center">m2</Cell>
              <Cell>47.22</Cell>
              <Cell $align="right">47.22</Cell>
              <Cell />
              <Cell $align="right">41.15</Cell>
              <Cell $align="right">1943.1</Cell>
              <Cell>装饰工程</Cell>
              <Cell>装饰工程</Cell>
              <Cell /><Cell /><Cell />
            </ItemRow>
            <CurrentRow>
              <RowNumber />
              <LeafCell $indent={50}>11-3-31</LeafCell>
              <Cell $align="center">换</Cell>
              <EditedCell><Lines lines={normLines} /></EditedCell>
              <Cell $align="center">10m2</Cell>
              <Cell>QDL</Cell>
              <Cell $align="right">4.722</Cell>
              <Cell $align="right">383.33</Cell>
              <Cell $align="right">411.51</Cell>
              <Cell $align="right">1943.15</Cell>
              <Cell>[装饰工程]</Cell>
              <Cell>装饰工程</Cell>
              <Cell>正常取费</Cell>
              <Cell>计取超高费用</Cell>
              <Cell />
            </CurrentRow>
          </tbody>
        </Grid>
      </UpperPane>

      <LowerPane>
        <DetailTabs>
          {detailTabs.map((tab, i) => (
            <DetailTab key={tab} type="button" $active={i === 0}>{tab}</DetailTab>
          ))}
        </DetailTabs>
        <LowerWrap>
          <ResourceGrid>
            <Columns widths={lowerWidths} />
            <thead>
              <tr>
                {lowerHeads.map((head, i) => (
                  <LowerHead key={i} scope="col">
                    <HeadText>
                      <span>{head.text}</span>
                      {head.unit && <HeadUnit>{head.unit}</HeadUnit>}
                    </HeadText>
                  </LowerHead>
                ))}
              </tr>
            </thead>
            <tbody>
              {resources.map((r) => (
                <ResourceRow key={r.no} r={r} />
              ))}
            </tbody>
          </ResourceGrid>
        </LowerWrap>
      </LowerPane>
    </Page>
  );
}
